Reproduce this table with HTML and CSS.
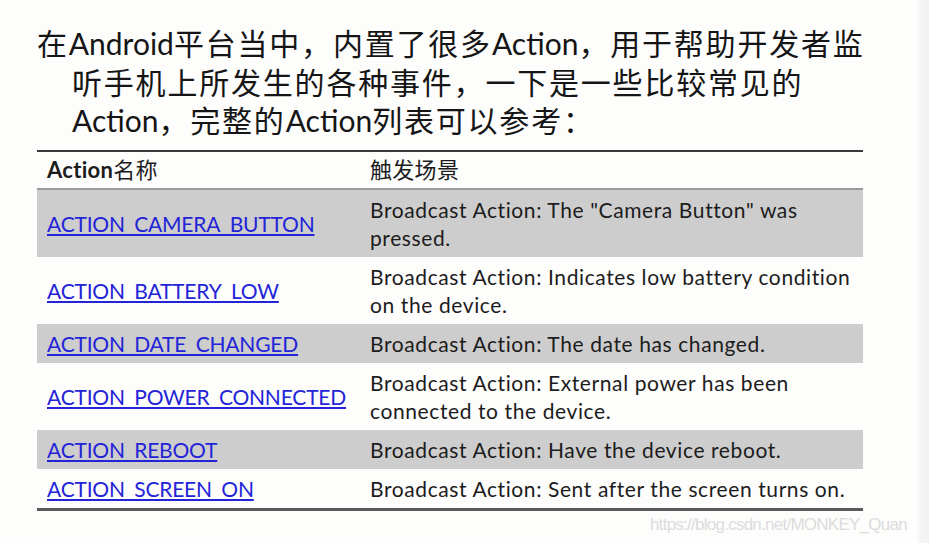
FILE: index.html
```html
<!DOCTYPE html>
<html lang="zh">
<head>
<meta charset="utf-8">
<link rel="stylesheet" href="styles.css">
</head>
<body>
<div class="page">
  <p class="intro">在<span class="lat">Android</span>平台当中，内置了很多<span class="lat">Action</span>，用于帮助开发者监<br>听手机上所发生的各种事件，一下是一些比较常见的<br><span class="lat">Action</span>，完整的<span class="lat">Action</span>列表可以参考：</p>
  <table class="actions">
    <thead>
      <tr><th class="c1"><b>Action</b>名称</th><th class="c2">触发场景</th></tr>
    </thead>
    <tbody>
      <tr class="shade"><td class="c1"><a href="#">ACTION_CAMERA_BUTTON</a></td><td class="c2">Broadcast Action: The "Camera Button" was pressed.</td></tr>
      <tr><td class="c1"><a href="#">ACTION_BATTERY_LOW</a></td><td class="c2">Broadcast Action: Indicates low battery condition on the device.</td></tr>
      <tr class="shade"><td class="c1"><a href="#">ACTION_DATE_CHANGED</a></td><td class="c2">Broadcast Action: The date has changed.</td></tr>
      <tr><td class="c1"><a href="#">ACTION_POWER_CONNECTED</a></td><td class="c2">Broadcast Action: External power has been connected to the device.</td></tr>
      <tr class="shade"><td class="c1"><a href="#">ACTION_REBOOT</a></td><td class="c2">Broadcast Action: Have the device reboot.</td></tr>
      <tr><td class="c1"><a href="#">ACTION_SCREEN_ON</a></td><td class="c2">Broadcast Action: Sent after the screen turns on.</td></tr>
    </tbody>
  </table>
  <div class="watermark">https://blog.csdn.net/MONKEY_Quan</div>
</div>
</body>
</html>
```

FILE: styles.css
```css
html, body {
  margin: 0;
  padding: 0;
}
body {
  background: linear-gradient(to right, #fdfdfc 0, #fdfdfc 916px, #f3f3f3 922px, #f3f3f3 100%);
  width: 929px;
  height: 543px;
  overflow: hidden;
}
.page {
  padding: 24px 0 0 37px;
  position: relative;
  height: 519px;
}
.intro {
  margin: 0;
  font-family: "Lato", "Noto Sans CJK SC", sans-serif;
  font-size: 30px;
  line-height: 38.5px;
  color: #151515;
  padding-left: 35px;
  text-indent: -35px;
  letter-spacing: 1.8px;
}
.intro .lat {
  letter-spacing: 0;
}
.actions {
  margin-top: 10px;
  width: 826px;
  border-collapse: collapse;
  font-family: "Lato", "Noto Sans CJK SC", sans-serif;
  font-size: 21px;
  color: #1c1c1c;
  border-top: 2px solid #3a3a3a;
  border-bottom: 3px solid #5a5a5a;
}
.actions th {
  font-weight: 400;
  font-size: 22px;
  text-align: left;
  height: 36px;
  padding: 0 0 0 10px;
  border-bottom: 2px solid #9a9a9a;
  line-height: 28px;
  letter-spacing: 0.3px;
}
.actions th b {
  font-weight: 700;
}
.actions td {
  padding: 6px 0 5px 10px;
  line-height: 28px;
  vertical-align: middle;
}
.actions td.c2 {
  letter-spacing: 0.6px;
  padding-right: 8px;
}
.actions .c1 {
  width: 313px;
}
.shade td {
  background: #cdcdcd;
}
.actions a {
  color: #2323d8;
  text-decoration: underline;
  text-underline-offset: 2px;
  letter-spacing: -0.2px;
}
.watermark {
  position: absolute;
  left: 650px;
  top: 515px;
  font-family: "Liberation Sans", sans-serif;
  font-size: 17px;
  color: #dcdcdc;
  letter-spacing: -0.75px;
}
```
